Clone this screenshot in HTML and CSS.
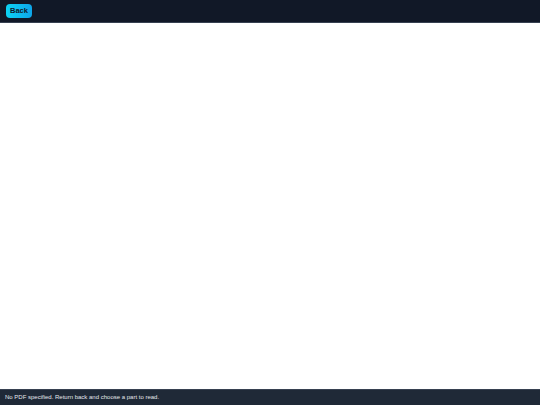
FILE: index.html
```html
<!DOCTYPE html>
<html>
<head>
<meta charset="utf-8">
<link rel="stylesheet" href="styles.css">
</head>
<body>
<div class="app">
  <header class="topbar">
    <button class="back-btn">Back</button>
  </header>
  <main class="viewer"></main>
  <footer class="status">No PDF specified. Return back and choose a part to read.</footer>
</div>
</body>
</html>
```

FILE: styles.css
```css
html, body {
  margin: 0;
  padding: 0;
  height: 100%;
}
body {
  font-family: "Liberation Sans", Arial, sans-serif;
  background: #ffffff;
}
.app {
  display: flex;
  flex-direction: column;
  height: 405px;
}
.topbar {
  height: 23px;
  background: #111827;
  border-bottom: 1px solid #374151;
  display: flex;
  align-items: center;
  padding-left: 6px;
  box-sizing: border-box;
}
.back-btn {
  height: 14px;
  width: 26px;
  padding: 0;
  border: none;
  border-radius: 4px;
  background: linear-gradient(to right, #0cd3f5, #0ea5e9);
  color: #0f172a;
  font-family: "Liberation Sans", Arial, sans-serif;
  font-weight: bold;
  font-size: 7.5px;
  line-height: 14px;
}
.viewer {
  flex: 1;
  background: #ffffff;
}
.status {
  height: 16px;
  background: #1f2937;
  border-top: 1px solid #374151;
  color: #e5e7eb;
  font-size: 6px;
  line-height: 15px;
  padding-left: 5px;
  box-sizing: border-box;
}
```
